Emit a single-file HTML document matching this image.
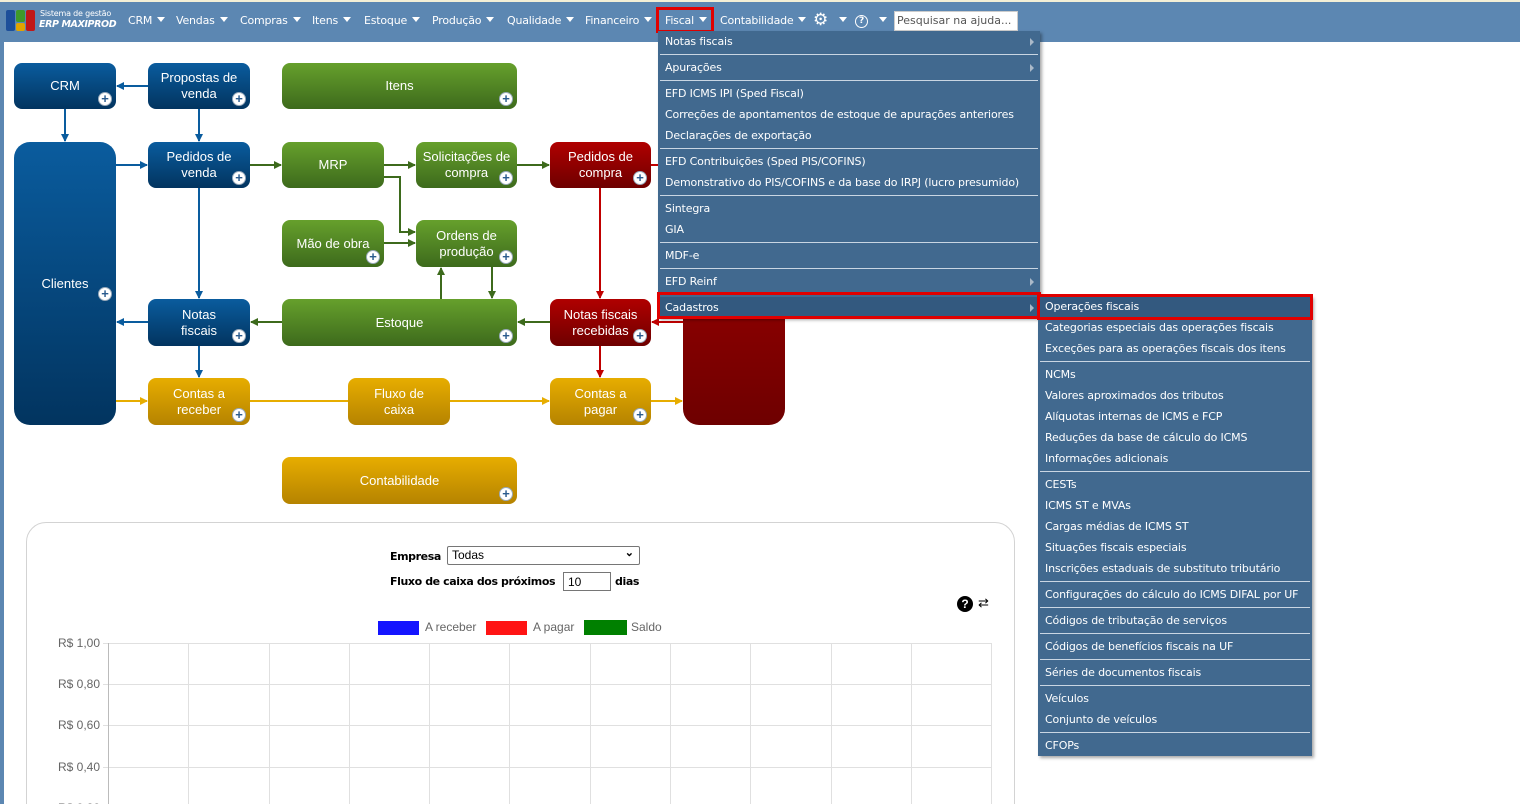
<!DOCTYPE html>
<html><head><meta charset="utf-8"><style>
*{box-sizing:border-box;margin:0;padding:0}
html,body{width:1520px;height:804px;overflow:hidden}
body{background:#fff;font-family:"Liberation Sans",sans-serif;position:relative}
.hdr{position:absolute;left:0;top:0;width:1520px;height:42px;background:#5c87b2;border-top:2px solid #f3efd6}
.strip{position:absolute;left:0;top:42px;width:4px;height:762px;background:#5c87b2}
.nav{position:absolute;top:14px;font-family:"DejaVu Sans",sans-serif;font-size:11px;letter-spacing:-0.2px;color:#fff;white-space:nowrap}
.car{display:inline-block;width:0;height:0;border-left:4px solid transparent;border-right:4px solid transparent;border-top:5px solid #fff;margin-left:5px;vertical-align:2px}
.box{position:absolute;border-radius:8px;color:#fff;font-size:13px;text-align:center;display:flex;align-items:center;justify-content:center;line-height:16px}
.b{background:linear-gradient(#0a5c9e,#02345f)}
.g{background:linear-gradient(#66a02c,#3d6a1c)}
.r{background:linear-gradient(#b00000,#6e0000)}
.y{background:linear-gradient(#e7ad00,#b58300)}
.pl{position:absolute;right:4px;bottom:3px;width:14px;height:14px;border-radius:50%;background:#fff;border:1px solid #9ab;color:#2a5b8e;font-size:13px;line-height:11px;font-weight:bold;text-align:center}
.menu{position:absolute;background:#41698f;box-shadow:2px 2px 3px rgba(0,0,0,.35);font-family:"DejaVu Sans",sans-serif;font-size:11px;letter-spacing:-0.15px;color:#fff}
.it{height:21px;line-height:21px;padding-left:7px;position:relative;white-space:nowrap}
.sep{height:5px;position:relative}
.sep:after{content:"";position:absolute;left:2px;right:2px;top:2px;height:1px;background:#c9d6e3}
.arr:after{content:"";position:absolute;right:6px;top:7px;border-top:4px solid transparent;border-bottom:4px solid transparent;border-left:4px solid #aab9c9}
.ax{position:absolute;font-size:12px;color:#666;width:100px;text-align:right}
.lb{position:absolute;font-family:"DejaVu Sans",sans-serif;font-size:11px;font-weight:bold;letter-spacing:-0.4px;white-space:nowrap}
</style></head><body>
<div class="hdr"></div><div class="strip"></div>
<svg style="position:absolute;left:6px;top:9px" width="30" height="23"><rect x="0" y="1" width="9" height="21" rx="2" fill="#1d4f9a"/><rect x="10" y="1" width="9" height="12" rx="2" fill="#3f9a2a"/><rect x="10" y="14" width="9" height="8" rx="2" fill="#e2a400"/><rect x="20" y="1" width="9" height="21" rx="2" fill="#c01818"/></svg>
<div style="position:absolute;left:40px;top:9px;color:#fff;font-family:'DejaVu Sans',sans-serif;font-size:8px;letter-spacing:-0.2px">Sistema de gestão</div>
<div style="position:absolute;left:39px;top:19px;color:#fff;font-family:'DejaVu Sans',sans-serif;font-size:9.5px;letter-spacing:-0.4px;font-style:italic;font-weight:bold">ERP MAXIPROD</div>
<div class="nav" style="left:128px">CRM<span class="car"></span></div>
<div class="nav" style="left:176px">Vendas<span class="car"></span></div>
<div class="nav" style="left:240px">Compras<span class="car"></span></div>
<div class="nav" style="left:312px">Itens<span class="car"></span></div>
<div class="nav" style="left:364px">Estoque<span class="car"></span></div>
<div class="nav" style="left:432px">Produção<span class="car"></span></div>
<div class="nav" style="left:507px">Qualidade<span class="car"></span></div>
<div class="nav" style="left:585px">Financeiro<span class="car"></span></div>
<div style="position:absolute;left:656px;top:7px;width:58px;height:26px;border:3px solid #e00000"></div>
<div class="nav" style="left:665px">Fiscal<span class="car"></span></div>
<div class="nav" style="left:720px">Contabilidade<span class="car"></span></div>
<div class="nav" style="left:813px;top:10px;font-size:17px">⚙</div>
<div class="nav" style="left:834px"><span class="car"></span></div>
<div class="nav" style="left:855px;top:13px;"><span style="display:inline-block;width:13px;height:13px;border:1.5px solid #fff;border-radius:50%;font-size:9px;text-align:center;line-height:11px;font-weight:bold">?</span></div>
<div class="nav" style="left:874px"><span class="car"></span></div>
<div style="position:absolute;left:894px;top:11px;width:124px;height:20px;background:#fff;border:1px solid #ccc;font-family:'DejaVu Sans',sans-serif;font-size:11px;color:#555;padding:2px 2px;white-space:nowrap;overflow:hidden">Pesquisar na ajuda...</div>

<svg style="position:absolute;left:0;top:0" width="800" height="520">
<defs>
<marker id="mb" markerWidth="8" markerHeight="8" refX="7" refY="4" orient="auto" markerUnits="userSpaceOnUse"><path d="M0,0L8,4L0,8z" fill="#0a5c9e"/></marker>
<marker id="mg" markerWidth="8" markerHeight="8" refX="7" refY="4" orient="auto" markerUnits="userSpaceOnUse"><path d="M0,0L8,4L0,8z" fill="#3d6a1c"/></marker>
<marker id="mr" markerWidth="8" markerHeight="8" refX="7" refY="4" orient="auto" markerUnits="userSpaceOnUse"><path d="M0,0L8,4L0,8z" fill="#c00000"/></marker>
<marker id="my" markerWidth="8" markerHeight="8" refX="7" refY="4" orient="auto" markerUnits="userSpaceOnUse"><path d="M0,0L8,4L0,8z" fill="#e7ad00"/></marker>
</defs>
<g stroke-width="2" fill="none">
<path d="M148,86H117" stroke="#0a5c9e" marker-end="url(#mb)"/>
<path d="M65,109V141" stroke="#0a5c9e" marker-end="url(#mb)"/>
<path d="M199,109V141" stroke="#0a5c9e" marker-end="url(#mb)"/>
<path d="M116,165H147" stroke="#0a5c9e" marker-end="url(#mb)"/>
<path d="M199,188V298" stroke="#0a5c9e" marker-end="url(#mb)"/>
<path d="M148,322H117" stroke="#0a5c9e" marker-end="url(#mb)"/>
<path d="M199,346V377" stroke="#0a5c9e" marker-end="url(#mb)"/>
<path d="M250,165H281" stroke="#3d6a1c" marker-end="url(#mg)"/>
<path d="M384,165H415" stroke="#3d6a1c" marker-end="url(#mg)"/>
<path d="M517,165H549" stroke="#3d6a1c" marker-end="url(#mg)"/>
<path d="M384,177H400V232H415" stroke="#3d6a1c" marker-end="url(#mg)"/>
<path d="M384,243H415" stroke="#3d6a1c" marker-end="url(#mg)"/>
<path d="M441,299V268" stroke="#3d6a1c" marker-end="url(#mg)"/>
<path d="M492,267V298" stroke="#3d6a1c" marker-end="url(#mg)"/>
<path d="M282,322H251" stroke="#3d6a1c" marker-end="url(#mg)"/>
<path d="M550,322H518" stroke="#3d6a1c" marker-end="url(#mg)"/>
<path d="M600,188V298" stroke="#c00000" marker-end="url(#mr)"/>
<path d="M600,346V377" stroke="#c00000" marker-end="url(#mr)"/>
<path d="M651,165H683" stroke="#c00000"/>
<path d="M683,322H652" stroke="#c00000" marker-end="url(#mr)"/>
<path d="M116,401H147" stroke="#e7ad00" marker-end="url(#my)"/>
<path d="M250,401H348" stroke="#e7ad00"/>
<path d="M450,401H549" stroke="#e7ad00" marker-end="url(#my)"/>
<path d="M651,401H682" stroke="#e7ad00" marker-end="url(#my)"/>
</g></svg>

<div class="box b" style="left:14px;top:63px;width:102px;height:46px">CRM<span class="pl">+</span></div>
<div class="box b" style="left:148px;top:63px;width:102px;height:46px">Propostas de<br>venda<span class="pl">+</span></div>
<div class="box g" style="left:282px;top:63px;width:235px;height:46px">Itens<span class="pl">+</span></div>
<div class="box b" style="left:14px;top:142px;width:102px;height:283px;border-radius:16px">Clientes<span class="pl" style="bottom:124px">+</span></div>
<div class="box b" style="left:148px;top:142px;width:102px;height:46px">Pedidos de<br>venda<span class="pl">+</span></div>
<div class="box g" style="left:282px;top:142px;width:102px;height:46px">MRP</div>
<div class="box g" style="left:416px;top:142px;width:101px;height:46px">Solicitações de<br>compra<span class="pl">+</span></div>
<div class="box r" style="left:550px;top:142px;width:101px;height:46px">Pedidos de<br>compra<span class="pl">+</span></div>
<div class="box r" style="left:683px;top:142px;width:102px;height:283px;border-radius:16px"></div>
<div class="box g" style="left:282px;top:220px;width:102px;height:47px">Mão de obra<span class="pl">+</span></div>
<div class="box g" style="left:416px;top:220px;width:101px;height:47px">Ordens de<br>produção<span class="pl">+</span></div>
<div class="box b" style="left:148px;top:299px;width:102px;height:47px">Notas<br>fiscais<span class="pl">+</span></div>
<div class="box g" style="left:282px;top:299px;width:235px;height:47px">Estoque<span class="pl">+</span></div>
<div class="box r" style="left:550px;top:299px;width:101px;height:47px">Notas fiscais<br>recebidas<span class="pl">+</span></div>
<div class="box y" style="left:148px;top:378px;width:102px;height:47px">Contas a<br>receber<span class="pl">+</span></div>
<div class="box y" style="left:348px;top:378px;width:102px;height:47px">Fluxo de<br>caixa</div>
<div class="box y" style="left:550px;top:378px;width:101px;height:47px">Contas a<br>pagar<span class="pl">+</span></div>
<div class="box y" style="left:282px;top:457px;width:235px;height:47px">Contabilidade<span class="pl">+</span></div>

<div style="position:absolute;left:26px;top:522px;width:989px;height:300px;border:1px solid #d3d3d3;border-radius:20px 20px 0 0"></div>
<div class="lb" style="left:390px;top:550px">Empresa</div>
<div style="position:absolute;left:447px;top:546px;width:193px;height:19px;border:1px solid #767676;border-radius:2px;font-size:12px;padding:1px 4px">Todas<span style="position:absolute;right:5px;top:-1px;font-size:11px;font-weight:bold">⌄</span></div>
<div class="lb" style="left:390px;top:575px">Fluxo de caixa dos próximos</div>
<div style="position:absolute;left:563px;top:572px;width:48px;height:19px;border:1px solid #767676;font-size:12px;padding:2px 4px">10</div>
<div class="lb" style="left:615px;top:575px">dias</div>
<div style="position:absolute;left:957px;top:596px;width:16px;height:16px;border-radius:50%;background:#000;color:#fff;font-size:12px;font-weight:bold;text-align:center;line-height:16px">?</div>
<div style="position:absolute;left:978px;top:595px;font-size:13px">⇄</div>
<div style="position:absolute;left:378px;top:621px;width:41px;height:14px;background:#1414ff"></div>
<div style="position:absolute;left:425px;top:620px;font-size:12px;color:#666">A receber</div>
<div style="position:absolute;left:486px;top:621px;width:41px;height:14px;background:#ff1414"></div>
<div style="position:absolute;left:533px;top:620px;font-size:12px;color:#666">A pagar</div>
<div style="position:absolute;left:584px;top:620px;width:43px;height:15px;background:#008000"></div>
<div style="position:absolute;left:631px;top:620px;font-size:12px;color:#666">Saldo</div>
<svg style="position:absolute;left:0;top:0" width="1000" height="804">
<g stroke="#e0e0e0" stroke-width="1">
<path d="M103,643.5H992M103,684.5H992M103,725.5H992M103,767.5H992M103,808.5H992"/>
<path d="M188.5,643V804M269.5,643V804M349.5,643V804M429.5,643V804M509.5,643V804M590.5,643V804M670.5,643V804M750.5,643V804M831.5,643V804M911.5,643V804M991.5,643V804"/>
</g><path d="M108.5,643V804" stroke="#bbb"/></svg>
<div class="ax" style="left:0;top:636px">R$ 1,00</div>
<div class="ax" style="left:0;top:677px">R$ 0,80</div>
<div class="ax" style="left:0;top:718px">R$ 0,60</div>
<div class="ax" style="left:0;top:760px">R$ 0,40</div>
<div class="ax" style="left:0;top:801px">R$ 0,20</div>

<div class="menu" style="left:658px;top:31px;width:382px">
<div class="it arr">Notas fiscais</div><div class="sep"></div>
<div class="it arr">Apurações</div><div class="sep"></div>
<div class="it">EFD ICMS IPI (Sped Fiscal)</div>
<div class="it">Correções de apontamentos de estoque de apurações anteriores</div>
<div class="it">Declarações de exportação</div><div class="sep"></div>
<div class="it">EFD Contribuições (Sped PIS/COFINS)</div>
<div class="it">Demonstrativo do PIS/COFINS e da base do IRPJ (lucro presumido)</div><div class="sep"></div>
<div class="it">Sintegra</div>
<div class="it">GIA</div><div class="sep"></div>
<div class="it">MDF-e</div><div class="sep"></div>
<div class="it arr">EFD Reinf</div><div class="sep"></div>
<div class="it arr" style="background:#33597f">Cadastros</div>
</div>
<div style="position:absolute;left:657px;top:292px;width:384px;height:27px;border:3px solid #e00000"></div>
<div class="menu" style="left:1038px;top:296px;width:274px">
<div class="it" style="background:#33597f">Operações fiscais</div>
<div class="it">Categorias especiais das operações fiscais</div>
<div class="it">Exceções para as operações fiscais dos itens</div><div class="sep"></div>
<div class="it">NCMs</div>
<div class="it">Valores aproximados dos tributos</div>
<div class="it">Alíquotas internas de ICMS e FCP</div>
<div class="it">Reduções da base de cálculo do ICMS</div>
<div class="it">Informações adicionais</div><div class="sep"></div>
<div class="it">CESTs</div>
<div class="it">ICMS ST e MVAs</div>
<div class="it">Cargas médias de ICMS ST</div>
<div class="it">Situações fiscais especiais</div>
<div class="it">Inscrições estaduais de substituto tributário</div><div class="sep"></div>
<div class="it">Configurações do cálculo do ICMS DIFAL por UF</div><div class="sep"></div>
<div class="it">Códigos de tributação de serviços</div><div class="sep"></div>
<div class="it">Códigos de benefícios fiscais na UF</div><div class="sep"></div>
<div class="it">Séries de documentos fiscais</div><div class="sep"></div>
<div class="it">Veículos</div>
<div class="it">Conjunto de veículos</div><div class="sep"></div>
<div class="it">CFOPs</div>
</div>
<div style="position:absolute;left:1037px;top:294px;width:276px;height:26px;border:3px solid #e00000"></div>
</body></html>
